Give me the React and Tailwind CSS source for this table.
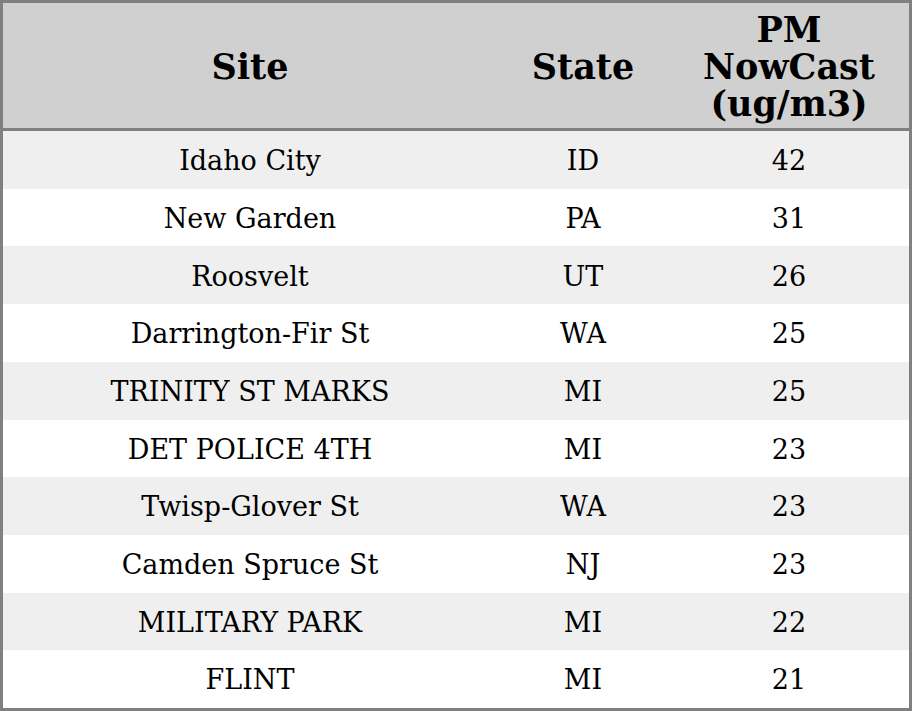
import React from 'react';

const rows = [
  { site: 'Idaho City', state: 'ID', pm: 42 },
  { site: 'New Garden', state: 'PA', pm: 31 },
  { site: 'Roosvelt', state: 'UT', pm: 26 },
  { site: 'Darrington-Fir St', state: 'WA', pm: 25 },
  { site: 'TRINITY ST MARKS', state: 'MI', pm: 25 },
  { site: 'DET POLICE 4TH', state: 'MI', pm: 23 },
  { site: 'Twisp-Glover St', state: 'WA', pm: 23 },
  { site: 'Camden Spruce St', state: 'NJ', pm: 23 },
  { site: 'MILITARY PARK', state: 'MI', pm: 22 },
  { site: 'FLINT', state: 'MI', pm: 21 }
];

function App() {
  return (
    <div className="w-[912px] h-[711px] bg-white font-['DejaVu_Serif',serif] text-black">
      <div className="h-full border-[3px] border-[#808080] flex flex-col">
        {/* header */}
        <div className="grid grid-cols-[494px_172px_240px] h-[128px] bg-[#d0d0d0] border-b-[3px] border-[#808080] text-[35px] font-bold leading-[37px]">
          <div className="flex items-center justify-center pt-[2px]">Site</div>
          <div className="flex items-center justify-center pt-[2px]">State</div>
          <div className="flex items-center justify-center text-center pt-[2px]">
            PM<br />NowCast<br />(ug/m3)
          </div>
        </div>

        {/* rows */}
        <div className="flex-1 flex flex-col text-[27px]">
          {rows.map((row, i) => (
            <div
              key={i}
              className={`flex-1 grid grid-cols-[494px_172px_240px] items-center text-center pt-[3px] ${i % 2 === 0 ? 'bg-[#efefef]' : 'bg-white'}`}
            >
              <div>{row.site}</div>
              <div>{row.state}</div>
              <div>{row.pm}</div>
            </div>
          ))}
        </div>
      </div>
    </div>
  );
}

export default App;
